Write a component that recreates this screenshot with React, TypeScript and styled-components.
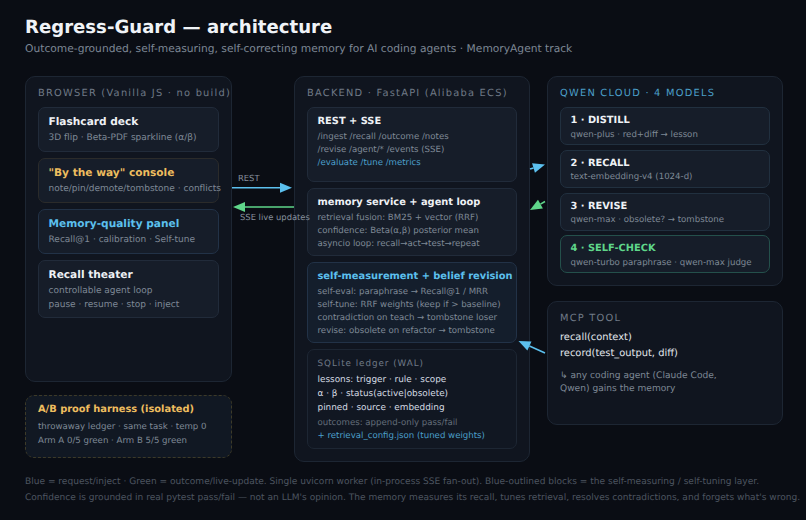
import React from 'react';
import styled, { createGlobalStyle } from 'styled-components';

const BLUE = '#5cc0ee';
const GREEN = '#5fd68a';
const AMBER = '#eebd5f';

const GlobalStyle = createGlobalStyle`
  html, body {
    margin: 0;
    padding: 0;
    background: #0a0d14;
    overflow: hidden;
  }
  body {
    font-family: "DejaVu Sans", sans-serif;
    text-rendering: geometricPrecision;
  }
`;

const Page = styled.div`
  width: 806px;
  height: 520px;
  padding: 17px 0 0 25px;
  box-sizing: border-box;
  background: #0a0d14;
  color: #e6edf3;
`;

const Title = styled.h1`
  margin: 0;
  font-size: 18.1px;
  line-height: 22px;
  font-weight: 700;
  color: #f0f3f7;
`;

const Subtitle = styled.p`
  margin: 2px 0 0;
  font-size: 10.7px;
  line-height: 16px;
  color: #7d8794;
`;

const Diagram = styled.div`
  position: relative;
  display: grid;
  grid-template-columns: 207px 236px 236px;
  column-gap: 17px;
  margin-top: 19px;
  width: 758px;
`;

const LeftColumn = styled.div`
  display: flex;
  flex-direction: column;
  gap: 13px;
  margin-right: -45px;
  width: 207px;
`;

const MiddleColumn = styled.div`
  margin-left: 45px;
  width: 236px;
  grid-column: 2;
`;

const RightColumn = styled.div`
  display: flex;
  flex-direction: column;
  gap: 15px;
  margin-left: 45px;
  width: 236px;
`;

const Panel = styled.section<{ $height: number }>`
  box-sizing: border-box;
  height: ${p => p.$height}px;
  padding: 10px 12px 0;
  background: #10151f;
  border: 1px solid #1d2633;
  border-radius: 10px;
`;

const PanelLabel = styled.div<{ $color?: string }>`
  margin: 0 0 7px 0;
  font-size: 9.85px;
  line-height: 13px;
  letter-spacing: 1.23px;
  white-space: nowrap;
  color: ${p => p.$color || '#6f7986'};
`;

const Stack = styled.div<{ $gap: number }>`
  display: flex;
  flex-direction: column;
  gap: ${p => p.$gap}px;
`;

const CardTitle = styled.div<{ $color?: string }>`
  font-size: 9.85px;
  line-height: 16px;
  font-weight: 700;
  white-space: nowrap;
  margin-bottom: 1px;
  color: ${p => p.$color || '#eef1f5'};
`;

const Line = styled.div<{ $color?: string }>`
  font-size: 8.6px;
  line-height: 13.2px;
  white-space: nowrap;
  color: ${p => p.$color || '#7f8996'};
`;

const Card = styled.div<{ $height: number; $border?: string; $bg?: string }>`
  box-sizing: border-box;
  height: ${p => p.$height}px;
  padding: 6px 10px 0 9.5px;
  background: ${p => p.$bg || '#161d29'};
  border: 1px solid ${p => p.$border || '#212b3a'};
  border-radius: 7px;
`;

const BrowserCard = styled(Card)`
  padding-top: 6px;

  ${CardTitle} {
    font-size: 10.6px;
  }

  ${Line} {
    font-size: 9px;
    line-height: 14px;
  }
`;

const ModelCard = styled(Card)`
  padding-top: 5px;

  ${CardTitle} {
    margin-bottom: -0.5px;
  }
`;

const LedgerCard = styled(Card)`
  padding-top: 6px;
`;

const LedgerLabel = styled.div`
  margin: 1px 0 2px;
  font-size: 8.8px;
  line-height: 14px;
  letter-spacing: 0.95px;
  color: #6f7986;
`;

const LedgerField = styled.div`
  font-size: 8.9px;
  line-height: 14px;
  white-space: nowrap;
  color: #d5dbe2;
`;

const LedgerNotes = styled.div`
  margin-top: 2px;
`;

const Harness = styled.section`
  box-sizing: border-box;
  height: 63px;
  padding: 6px 12px 0;
  background: #111823;
  border: 1px dashed #3d3a28;
  border-radius: 9px;

  ${CardTitle} {
    margin-bottom: 2px;
  }

  ${Line} {
    line-height: 14px;
  }
`;

const ToolCalls = styled.div`
  margin-top: -2px;
`;

const ToolCall = styled.div`
  font-size: 9.9px;
  line-height: 15.6px;
  white-space: nowrap;
  color: #e2e7ec;
`;

const ToolNote = styled.div`
  margin-top: 8.5px;

  ${Line} {
    font-size: 9.1px;
  }
`;

const LinkLabel = styled.span<{ $left: number; $top: number }>`
  position: absolute;
  left: ${p => p.$left}px;
  top: ${p => p.$top}px;
  font-size: 8.4px;
  line-height: 11px;
  white-space: nowrap;
  color: #87919e;
`;

const Links = styled.svg`
  position: absolute;
  left: 0;
  top: 0;
  overflow: visible;
  pointer-events: none;
`;

const Footer = styled.footer`
  margin-top: 12px;
`;

const FooterLine = styled.p`
  margin: 0;
  font-size: 9.05px;
  line-height: 16.4px;
  white-space: nowrap;
  color: #4d5560;
`;

type ArrowProps = { x1: number; y1: number; x2: number; y2: number; color: string };

// coordinates are relative to the diagram origin (25, 76)
const Arrow = ({ x1, y1, x2, y2, color }: ArrowProps) => {
  const angle = Math.atan2(y2 - y1, x2 - x1);
  const len = 12;
  const half = 5;
  const bx = x2 - Math.cos(angle) * len;
  const by = y2 - Math.sin(angle) * len;
  const nx = -Math.sin(angle) * half;
  const ny = Math.cos(angle) * half;
  return (
    <g>
      <line x1={x1} y1={y1} x2={bx} y2={by} stroke={color} strokeWidth={1.6} />
      <polygon points={`${x2},${y2} ${bx + nx},${by + ny} ${bx - nx},${by - ny}`} fill={color} />
    </g>
  );
};

const arrows: ArrowProps[] = [
  { x1: 207, y1: 111.7, x2: 267, y2: 111.7, color: BLUE },
  { x1: 269, y1: 131, x2: 208, y2: 131, color: GREEN },
  { x1: 505, y1: 93, x2: 520, y2: 88.5, color: BLUE },
  { x1: 520, y1: 125.5, x2: 505, y2: 134, color: GREEN },
  { x1: 520, y1: 277, x2: 493.5, y2: 265, color: BLUE },
];

const App = () => (
  <Page>
    <GlobalStyle />
    <Title>Regress-Guard — architecture</Title>
    <Subtitle>Outcome-grounded, self-measuring, self-correcting memory for AI coding agents · MemoryAgent track</Subtitle>

    <Diagram>
      <LeftColumn>
        <Panel $height={306}>
          <PanelLabel>BROWSER (Vanilla JS · no build)</PanelLabel>
          <Stack $gap={6}>
            <BrowserCard $height={45}>
              <CardTitle>Flashcard deck</CardTitle>
              <Line>3D flip · Beta-PDF sparkline (α/β)</Line>
            </BrowserCard>
            <BrowserCard $height={45} $border="#2b2b2a">
              <CardTitle $color={AMBER}>"By the way" console</CardTitle>
              <Line>note/pin/demote/tombstone · conflicts</Line>
            </BrowserCard>
            <BrowserCard $height={45} $border="#223247">
              <CardTitle $color={BLUE}>Memory-quality panel</CardTitle>
              <Line>Recall@1 · calibration · Self-tune</Line>
            </BrowserCard>
            <BrowserCard $height={58}>
              <CardTitle>Recall theater</CardTitle>
              <Line>controllable agent loop</Line>
              <Line>pause · resume · stop · inject</Line>
            </BrowserCard>
          </Stack>
        </Panel>
        <Harness>
          <CardTitle $color={AMBER}>A/B proof harness (isolated)</CardTitle>
          <Line>throwaway ledger · same task · temp 0</Line>
          <Line>Arm A 0/5 green · Arm B 5/5 green</Line>
        </Harness>
      </LeftColumn>

      <MiddleColumn>
        <Panel $height={386}>
          <PanelLabel>BACKEND · FastAPI (Alibaba ECS)</PanelLabel>
          <Stack $gap={6}>
            <Card $height={74.5}>
              <CardTitle>REST + SSE</CardTitle>
              <Line>/ingest /recall /outcome /notes</Line>
              <Line>/revise /agent/* /events (SSE)</Line>
              <Line $color="#4b9fc9">/evaluate /tune /metrics</Line>
            </Card>
            <Card $height={68}>
              <CardTitle>memory service + agent loop</CardTitle>
              <Line>retrieval fusion: BM25 + vector (RRF)</Line>
              <Line>confidence: Beta(α,β) posterior mean</Line>
              <Line>asyncio loop: recall→act→test→repeat</Line>
            </Card>
            <Card $height={81.5} $border="#223247" $bg="#141e2c">
              <CardTitle $color={BLUE}>self-measurement + belief revision</CardTitle>
              <Line>self-eval: paraphrase → Recall@1 / MRR</Line>
              <Line>self-tune: RRF weights (keep if &gt; baseline)</Line>
              <Line>contradiction on teach → tombstone loser</Line>
              <Line>revise: obsolete on refactor → tombstone</Line>
            </Card>
            <LedgerCard $height={100} $bg="#111722" $border="#1d2633">
              <LedgerLabel>SQLite ledger (WAL)</LedgerLabel>
              <LedgerField>lessons: trigger · rule · scope</LedgerField>
              <LedgerField>α · β · status(active|obsolete)</LedgerField>
              <LedgerField>pinned · source · embedding</LedgerField>
              <LedgerNotes>
                <Line $color="#636d79">outcomes: append-only pass/fail</Line>
                <Line $color="#4b9fc9">+ retrieval_config.json (tuned weights)</Line>
              </LedgerNotes>
            </LedgerCard>
          </Stack>
        </Panel>
      </MiddleColumn>

      <RightColumn>
        <Panel $height={210}>
          <PanelLabel $color="#4b9fc9">QWEN CLOUD · 4 MODELS</PanelLabel>
          <Stack $gap={4.8}>
            <ModelCard $height={38} $border="#21303f">
              <CardTitle>1 · DISTILL</CardTitle>
              <Line>qwen-plus · red+diff → lesson</Line>
            </ModelCard>
            <ModelCard $height={38} $border="#21303f">
              <CardTitle>2 · RECALL</CardTitle>
              <Line>text-embedding-v4 (1024-d)</Line>
            </ModelCard>
            <ModelCard $height={38} $border="#21303f">
              <CardTitle>3 · REVISE</CardTitle>
              <Line>qwen-max · obsolete? → tombstone</Line>
            </ModelCard>
            <ModelCard $height={38} $border="#24504b">
              <CardTitle $color={GREEN}>4 · SELF-CHECK</CardTitle>
              <Line>qwen-turbo paraphrase · qwen-max judge</Line>
            </ModelCard>
          </Stack>
        </Panel>
        <Panel $height={124}>
          <PanelLabel>MCP TOOL</PanelLabel>
          <ToolCalls>
            <ToolCall>recall(context)</ToolCall>
            <ToolCall>record(test_output, diff)</ToolCall>
          </ToolCalls>
          <ToolNote>
            <Line>↳ any coding agent (Claude Code,</Line>
            <Line>Qwen) gains the memory</Line>
          </ToolNote>
        </Panel>
      </RightColumn>

      <Links width={758} height={386}>
        {arrows.map(a => (
          <Arrow key={`${a.x1}-${a.y1}`} {...a} />
        ))}
      </Links>
      <LinkLabel $left={213} $top={97}>REST</LinkLabel>
      <LinkLabel $left={215} $top={136}>SSE live updates</LinkLabel>
    </Diagram>

    <Footer>
      <FooterLine>Blue = request/inject · Green = outcome/live-update. Single uvicorn worker (in-process SSE fan-out). Blue-outlined blocks = the self-measuring / self-tuning layer.</FooterLine>
      <FooterLine>Confidence is grounded in real pytest pass/fail — not an LLM's opinion. The memory measures its recall, tunes retrieval, resolves contradictions, and forgets what's wrong.</FooterLine>
    </Footer>
  </Page>
);

export default App;
